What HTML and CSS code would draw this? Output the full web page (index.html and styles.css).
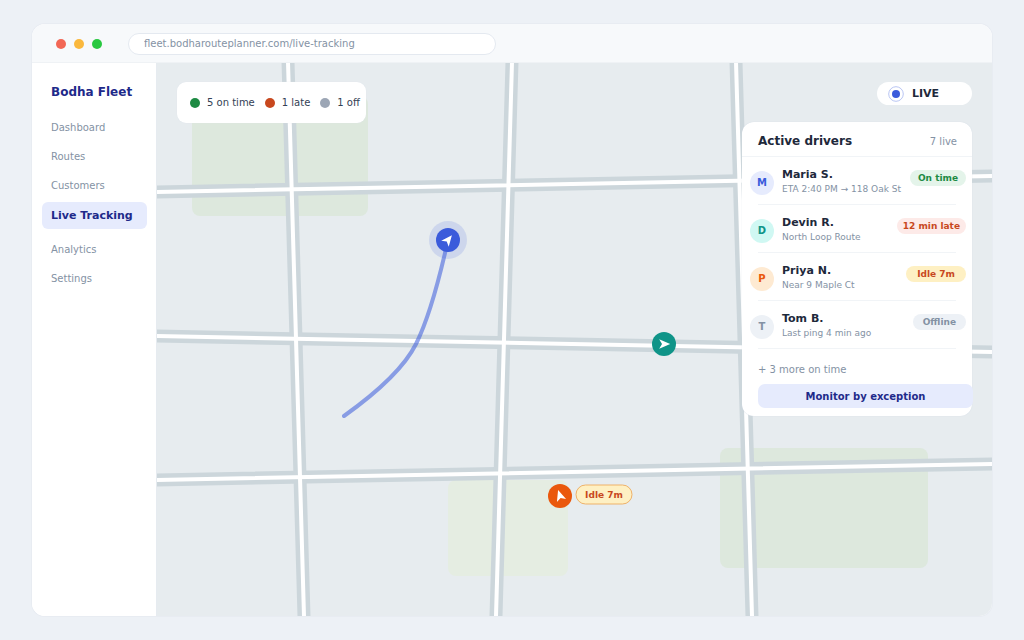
FILE: index.html
```html
<!DOCTYPE html>
<html lang="en">
<head>
<meta charset="utf-8">
<meta name="viewport" content="width=device-width, initial-scale=1">
<title>Bodha Fleet - Live Tracking</title>
<link rel="stylesheet" href="styles.css">
</head>
<body>
<div class="window">
  <header class="chrome">
    <div class="lights" aria-hidden="true">
      <span class="light light-red"></span>
      <span class="light light-yellow"></span>
      <span class="light light-green"></span>
    </div>
    <input class="address" type="text" aria-label="Address" value="fleet.bodharouteplanner.com/live-tracking">
  </header>
  <div class="app">
    <aside class="sidebar">
      <div class="brand">Bodha Fleet</div>
      <nav class="nav">
        <a class="nav-link" href="#">Dashboard</a>
        <a class="nav-link" href="#">Routes</a>
        <a class="nav-link" href="#">Customers</a>
        <a class="nav-link active" href="#" aria-current="page">Live Tracking</a>
        <a class="nav-link" href="#">Analytics</a>
        <a class="nav-link" href="#">Settings</a>
      </nav>
    </aside>
    <main class="map">
      <svg class="map-canvas" viewBox="157 63 835 553" preserveAspectRatio="xMinYMin slice" role="img" aria-label="Driver map">
        <defs>
          <path id="arrow" d="M6.2 0 -4.8 -4.8 -2 0 -4.8 4.8Z"/>
          <g id="roads">
            <path d="M150 192.1 1000 175.8M150 335.9 1000 352.2M150 480.1 1000 463.8"/>
            <path d="M287.8 55 304.2 623M512.2 55 495.8 623M735.8 55 752.2 623"/>
          </g>
        </defs>
        <rect class="park" x="192" y="96" width="176" height="120" rx="8"/>
        <rect class="park" x="720" y="448" width="208" height="120" rx="8"/>
        <rect class="park park-light" x="448" y="480" width="120" height="96" rx="8"/>
        <use class="road-casing" href="#roads"/>
        <use class="road-surface" href="#roads"/>
        <path class="route" d="M344 416Q400 376 416 344T448 240"/>
        <g transform="translate(448 240)">
          <circle class="halo" r="19"/>
          <circle class="pin-blue" r="12"/>
          <use class="arrow" href="#arrow" transform="rotate(-51)"/>
        </g>
        <g transform="translate(664 344)">
          <circle class="pin-teal" r="12"/>
          <use class="arrow" href="#arrow"/>
        </g>
        <g transform="translate(560 496)">
          <circle class="pin-orange" r="12"/>
          <use class="arrow" href="#arrow" transform="rotate(-108)"/>
        </g>
        <rect class="tag" x="576" y="485" width="56" height="19" rx="9.5"/>
        <text class="tag-text" x="604" y="498">Idle 7m</text>
      </svg>

      <ul class="legend">
        <li><span class="dot dot-green"></span>5 on time</li>
        <li><span class="dot dot-red"></span>1 late</li>
        <li><span class="dot dot-gray"></span>1 off</li>
      </ul>

      <div class="side">
        <div class="live">
          <svg class="live-icon" viewBox="0 0 16 16" aria-hidden="true">
            <circle class="live-ring" cx="8" cy="8" r="7.3"/>
            <circle class="pin-blue" cx="8" cy="8" r="4"/>
          </svg>
          LIVE
        </div>
        <section class="panel">
          <div class="panel-head">
            <h2 class="panel-title">Active drivers</h2>
            <span class="panel-count">7 live</span>
          </div>
          <ul class="drivers">
            <li class="driver">
              <span class="avatar avatar-blue">M</span>
              <div class="info"><div class="name">Maria S.</div><div class="note">ETA 2:40 PM → 118 Oak St</div></div>
              <span class="badge badge-green">On time</span>
            </li>
            <li class="driver">
              <span class="avatar avatar-teal">D</span>
              <div class="info"><div class="name">Devin R.</div><div class="note">North Loop Route</div></div>
              <span class="badge badge-red">12 min late</span>
            </li>
            <li class="driver">
              <span class="avatar avatar-orange">P</span>
              <div class="info"><div class="name">Priya N.</div><div class="note">Near 9 Maple Ct</div></div>
              <span class="badge badge-yellow">Idle 7m</span>
            </li>
            <li class="driver">
              <span class="avatar avatar-gray">T</span>
              <div class="info"><div class="name">Tom B.</div><div class="note">Last ping 4 min ago</div></div>
              <span class="badge badge-gray">Offline</span>
            </li>
          </ul>
          <div class="more">+ 3 more on time</div>
          <button class="monitor" type="button">Monitor by exception</button>
        </section>
      </div>
    </main>
  </div>
</div>
</body>
</html>
```

FILE: styles.css
```css
* { box-sizing: border-box; }

body {
  display: flex;
  min-height: 100vh;
  margin: 0;
  padding: 24px 32px;
  background: #edf1f6;
  color: #1e293b;
  font-family: "DejaVu Sans", Verdana, sans-serif;
  font-size: 10px;
  line-height: 15px;
}

ul { margin: 0; padding: 0; list-style: none; }

.window {
  flex: 1;
  display: flex;
  flex-direction: column;
  overflow: hidden;
  border-radius: 13px;
  background: #fff;
  box-shadow: 0 0 0 1px #e8ecf2;
}

.chrome {
  display: flex;
  align-items: center;
  gap: 26px;
  height: 39px;
  padding: 1px 24px 0;
  background: #f7f9fb;
  border-bottom: 1px solid #eff2f5;
}

.lights { display: flex; gap: 8px; }
.light { width: 10px; height: 10px; border-radius: 50%; }
.light-red { background: #f26755; }
.light-yellow { background: #fab83d; }
.light-green { background: #28c840; }

.address {
  width: 44%;
  max-width: 368px;
  height: 22px;
  padding: 0 15px;
  border: 1px solid #e4e9f0;
  border-radius: 11px;
  background: #fff;
  color: #8492a4;
  font: inherit;
}

.app { flex: 1; display: flex; }

.sidebar {
  width: 125px;
  padding: 20px 9px 20px 10px;
  background: #fff;
  border-right: 1px solid #e6ebf0;
}

.brand {
  padding: 0 9px;
  margin-bottom: 14px;
  color: #1e2a8a;
  font-size: 12px;
  font-weight: 700;
  line-height: 18px;
}

.nav { display: flex; flex-direction: column; gap: 4px; }

.nav-link {
  padding: 5px 9px;
  border-radius: 6px;
  color: #8492a4;
  text-decoration: none;
}

.nav-link.active {
  margin-bottom: 4px;
  padding: 6px 9px;
  background: #e6ebfd;
  color: #1e2a8a;
  font-size: 11px;
  font-weight: 700;
}

.map {
  position: relative;
  flex: 1;
  padding: 19px 20px;
  background: #e7ecef;
  display: flex;
  justify-content: space-between;
  align-items: flex-start;
}

.map-canvas { position: absolute; top: 0; left: 0; width: 100%; height: 100%; }

.park { fill: #dde8dd; }
.park-light { fill: #e5ede2; }
.road-casing, .road-surface { fill: none; stroke: #ccd6db; stroke-width: 13px; }
.road-surface { stroke: #fff; stroke-width: 4px; }
.route { fill: none; stroke: #3b5bdb; stroke-opacity: 0.55; stroke-width: 4px; stroke-linecap: round; }
.halo { fill: #3b5bdb; fill-opacity: 0.15; }
.pin-blue { fill: #3b5bdb; }
.pin-teal { fill: #0f9488; }
.pin-orange { fill: #ea580c; }
.arrow { fill: #fff; }
.tag { fill: #fef0c3; stroke: #efb268; stroke-width: 1px; }
.tag-text { fill: #c8481e; font-size: 9px; font-weight: 700; text-anchor: middle; }

.legend {
  position: relative;
  display: flex;
  gap: 10px;
  padding: 13px 6px 13px 13px;
  border-radius: 9px;
  background: #fff;
  box-shadow: 0 0 1px #dbe2ea;
  color: #334155;
}
.legend li { display: flex; align-items: center; gap: 7px; white-space: nowrap; }
.dot { width: 10px; height: 10px; border-radius: 50%; }
.dot-green { background: #1d8a43; }
.dot-red { background: #c8481e; }
.dot-gray { background: #9ca6b5; }

.side {
  position: relative;
  display: flex;
  flex-direction: column;
  align-items: flex-end;
  gap: 17px;
  width: 230px;
}

.live {
  display: flex;
  align-items: center;
  gap: 8px;
  width: 95px;
  height: 23px;
  padding: 0 11px;
  border-radius: 12px;
  background: #fff;
  font-size: 11px;
  font-weight: 700;
}
.live-icon { width: 16px; height: 16px; }
.live-ring { fill: #fff; stroke: #b9c5f3; stroke-width: 1px; }

.panel {
  width: 100%;
  padding-bottom: 8px;
  border-radius: 12px;
  background: #fff;
  box-shadow: 0 0 1px #cbd5e1;
}

.panel-head {
  display: flex;
  align-items: center;
  justify-content: space-between;
  height: 35px;
  padding: 4px 15px 0 16px;
  border-bottom: 1px solid #f1f4f7;
}
.panel-title { margin: 0; font-size: 12px; font-weight: 700; }
.panel-count { color: #8492a4; }

.driver {
  position: relative;
  display: flex;
  align-items: flex-start;
  height: 48px;
  padding: 0 6px 0 8px;
}
.driver::after {
  content: "";
  position: absolute;
  right: 16px;
  bottom: 0;
  left: 16px;
  height: 1px;
  background: #f1f4f7;
}

.avatar {
  width: 24px;
  height: 24px;
  margin: 14px 8px 0 0;
  border-radius: 50%;
  font-weight: 700;
  line-height: 24px;
  text-align: center;
}
.avatar-blue { background: #e6ebfd; color: #3b5bdb; }
.avatar-teal { background: #d0f8f3; color: #0f9488; }
.avatar-orange { background: #feead2; color: #ea580c; }
.avatar-gray { background: #edf1f6; color: #8492a4; }

.info { flex: 1; padding-top: 10px; white-space: nowrap; }
.name { font-size: 11px; font-weight: 700; }
.note { color: #8492a4; font-size: 9px; }

.badge {
  margin-top: 13px;
  padding: 0 8px;
  border-radius: 8px;
  font-size: 9px;
  font-weight: 700;
  line-height: 16px;
  white-space: nowrap;
}
.badge-green { background: #e4f4ea; color: #1d8a43; }
.badge-red { padding: 0 6px; background: #fdeae8; color: #c8481e; }
.badge-yellow { padding: 0 11px; background: #fef0c3; color: #c8481e; }
.badge-gray { padding: 0 10px; background: #edf1f6; color: #8492a4; }

.more { padding: 13px 16px 7px; color: #8492a4; }

.monitor {
  display: block;
  width: calc(100% - 15px);
  height: 24px;
  margin: 0 -1px 0 16px;
  padding: 0;
  border: 0;
  border-radius: 7px;
  background: #e6ebfd;
  color: #1e2a8a;
  font: inherit;
  font-weight: 700;
}
```
